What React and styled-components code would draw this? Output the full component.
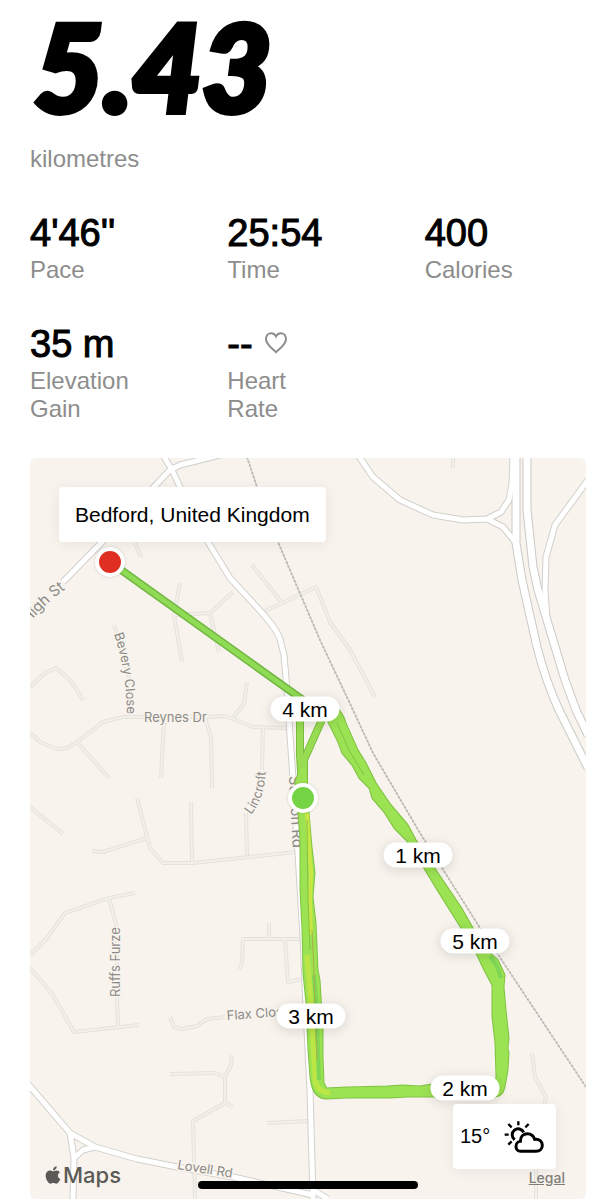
import React from 'react';
import styled, { createGlobalStyle } from 'styled-components';
import { FaApple } from 'react-icons/fa';

const GlobalStyle = createGlobalStyle`
  * {
    box-sizing: border-box;
  }

  body {
    margin: 0;
    background: #fff;
    color: #000;
    font-family: "Liberation Sans", Arial, sans-serif;
  }
`;

const Page = styled.main`
  padding: 16px 29px 1px 30px;
`;

const Distance = styled.h1`
  margin: 0;
  padding-left: 4px;
  font: italic 900 120px/100px Lato, sans-serif;
  -webkit-text-stroke: 6px #000;
`;

const Unit = styled.p`
  margin: 29px 0 0;
  color: #8d8d8d;
  font-size: 24px;
  line-height: 28px;
`;

const Stats = styled.dl`
  display: grid;
  grid-template-columns: repeat(3, 1fr);
  gap: 38px 36px;
  margin: 38px 0 35px;
`;

const Stat = styled.div`
  display: flex;
  flex-direction: column-reverse;
  justify-content: flex-end;
`;

const StatLabel = styled.dt`
  max-width: 110px;
  color: #8d8d8d;
  font-size: 24px;
  line-height: 28px;
`;

const StatValue = styled.dd`
  display: flex;
  align-items: center;
  gap: 12px;
  margin: 0;
  font-size: 38px;
  line-height: 45px;
  -webkit-text-stroke: 1px #000;

  svg {
    margin-bottom: 4px;
  }
`;

const MapCard = styled.section`
  position: relative;
  aspect-ratio: 556 / 741;
  overflow: hidden;
  border-radius: 6px;
  background: #f8f4ed;
`;

const MapDrawing = styled.svg`
  display: block;
  width: 100%;
  height: 100%;

  path {
    fill: none;
    stroke-linejoin: round;
  }

  text {
    fill: #8c8a88;
    stroke: #f8f4ed;
    stroke-width: 3px;
    paint-order: stroke;
    font-family: Inter, sans-serif;
    font-size: 13px;
  }
`;

const MainRoadName = styled.text`
  && {
    font-size: 15px;
  }
`;

const Card = styled.div`
  position: absolute;
  display: flex;
  align-items: center;
  border-radius: 4px;
  background: #fff;
  box-shadow: 0 2px 14px rgba(0, 0, 0, 0.07);
`;

const PlaceCard = styled(Card)`
  top: 29px;
  left: 29px;
  height: 55px;
  padding: 0 16px;
  font-size: 21px;
`;

const WeatherCard = styled(Card)`
  right: 30px;
  bottom: 30px;
  justify-content: space-between;
  width: 103px;
  height: 65px;
  padding: 0 12px 0 7px;
  font-size: 20px;
`;

// x and y are in the same units as the map drawing
const Pin = styled.span`
  position: absolute;
  left: ${props => ((props.$x - 30) / 556) * 100}%;
  top: ${props => ((props.$y - 458) / 741) * 100}%;
  transform: translate(-50%, -50%);
`;

const KmPin = styled(Pin)`
  width: 69px;
  border-radius: 13px;
  background: #fff;
  box-shadow: 0 2px 12px rgba(0, 0, 0, 0.14);
  font-size: 21px;
  line-height: 25px;
  text-align: center;
`;

const DotPin = styled(Pin)`
  width: 30px;
  height: 30px;
  border: 4px solid #fff;
  border-radius: 50%;
  background: ${props => props.$color};
  box-shadow: 0 0 3px rgba(0, 0, 0, 0.16);
`;

const Attribution = styled.div`
  position: absolute;
  left: 13px;
  bottom: 11px;
  display: flex;
  align-items: center;
  color: #5b5a57;
  font: 500 22px/26px Inter, sans-serif;
`;

const LegalLink = styled.a`
  position: absolute;
  right: 21px;
  bottom: 12px;
  color: #807e7b;
  font: 500 14px/18px Inter, sans-serif;
`;

const HomeIndicator = styled.div`
  position: fixed;
  bottom: 11px;
  left: 50%;
  width: 220px;
  height: 8px;
  border-radius: 4px;
  background: #000;
  transform: translateX(-50%);
`;

const stats = [
  { label: 'Pace', value: "4'46''" },
  { label: 'Time', value: '25:54' },
  { label: 'Calories', value: '400' },
  { label: 'Elevation Gain', value: '35 m' },
  { label: 'Heart Rate', value: '--', heart: true },
];

const kmPins = [
  { km: 3, x: 311, y: 1016 },
  { km: 2, x: 465, y: 1088 },
  { km: 1, x: 418, y: 855 },
  { km: 5, x: 475, y: 941 },
  { km: 4, x: 305, y: 709 },
];

const lanes = `
  M135 543L141 557 M180 583L174 615L182 662 M174 615L210 613L233 592 M210 613L219 652
  M252 565L282 603 M261 613L282 603L316 587L330 622L350 650L375 697
  M114 625L132 690V717 M30 687L45 673L56 668L70 680L83 700 M247 682L244 703L233 718
  M30 733L40 742L57 749L67 748L77 742L103 722L123 717H205L225 716L253 727L288 728
  M77 742L109 778 M164 720L161 778 M205 718L211 737L212 788 M263 728L262 770
  M246 813L247 855 M137 798L150 848L163 863H193L295 852 M191 802L192 863
  M92 851L103 852L147 838 M30 807L63 834 M135 893L109 898L65 913L47 938L30 955
  M109 898L117 928V997L118 1027 M269 923V939 M303 939H243L242 963L239 970
  M285 940L288 982L303 979 M30 968L53 995L74 1032L139 1025
  M170 1017L174 1027L182 1029L197 1026L207 1019L225 1017
  M170 1074L215 1073L225 1077V1103L193 1121L195 1199 M232 1055L231 1065L225 1077
  M225 1103L233 1107 M267 1123L309 1121 M532 1053L535 1077L546 1097L536 1140V1199
  M453 457V468`;

const streets = `
  M220 455L180 465L170 470L102 542L63 582
  M358 455L373 477L400 500L433 515L463 520L487 519L501 512L509 500L512 483L513 455
  M487 519L503 527L516 543 M588 480L555 525L546 557L545 590L547 620
  M74 1158L83 1150L95 1147 M313 1190L328 1199`;

const mainRoads = `
  M163 455L172 470L180 487L208 542L230 578L264 615Q277 630 280 639L284 655L287 690L290 735
  L298 853L303 937L307 1030L310 1090L313 1199
  M28 1084L70 1133L95 1147L137 1159L177 1167L233 1177L313 1195
  M70 1133L74 1158L73 1199`;

const motorways = `
  M516 455V543L522 580L537 647Q546 682 559 710L588 768
  M527 455V510L533 567L538 590L550 630L565 680L576 710L588 735`;

const railway = 'M247 457L257 487L278 542L320 640L353 710L373 753L420 833L480 928L497 953L586 1087';

const strands = 'M300 700V755L302 785M324 715L304 760V785';

const loop = `
  M335 707Q342 713 345 723L357 750L365 763L375 783L390 805L407 825L415 840L437 873L460 907
  L472 928L488 952L497 960L504 975L503 987L505 1010L508 1038L507 1048L508 1053L507 1070
  L504 1087Q502 1096 495 1096H432L408 1096L390 1097L347 1097L327 1098Q313 1098 311 1077
  L309 1050L307 1003L304 973L303 930L301 890V840L299 813L296 782L301 768L305 768L306 780
  L308 813L311 847L314 873L312 897L315 923L317 970L319 980L320 997L322 1027V1057L323 1083
  L326 1089L347 1088L387 1087L403 1086L420 1087L432 1085H490Q497 1084 497 1077L496 1043
  L493 1017V985L485 970L477 953L462 928L440 893L423 865L407 840L395 828L385 812L373 798
  L370 788L360 778L353 765L343 753L338 740L328 720Z`;

const HeartIcon = () => (
  <svg width="22" height="22" viewBox="0 0 22 22" fill="none" stroke="#8d8d8d" strokeWidth="2" aria-hidden="true">
    <path d="M11 20.2C8.5 17.2 1 13 1 6.9C1 3.5 3.4 1.2 6.2 1.2C8.5 1.2 10.2 2.6 11 4.4C11.8 2.6 13.5 1.2 15.8 1.2C18.6 1.2 21 3.5 21 6.9C21 13 13.5 17.2 11 20.2Z" />
  </svg>
);

const WeatherIcon = () => (
  <svg width="40" height="32" viewBox="0 0 120 96" fill="none" stroke="#000" strokeWidth="9" role="img" aria-label="Partly cloudy">
    <path d="M43 1V13M74 9L64 19M13 9L23 19M2 41H14M13 71L23 61" strokeWidth="7" />
    <path d="M32 56A18 18 0 1 1 59 34" />
    <path d="M50 91C31 91 32 62 49 61C49 46 59 38 70 38C82 38 89 45 92 55C106 53 115 62 115 73C115 84 107 91 96 91Z" />
  </svg>
);

const RouteMap = () => (
  <MapDrawing viewBox="30 458 556 741" preserveAspectRatio="none" aria-label="Route map" role="img">
    <path d={lanes} stroke="#e5e2dc" strokeWidth="4" />
    <path d={lanes} stroke="#f3f0ea" strokeWidth="2" />
    <path d={railway} stroke="#c4c1bd" strokeWidth="1" />
    <path d={railway} stroke="#bdbab6" strokeWidth="2" strokeDasharray="2 2" />
    <path d={streets} stroke="#d2d0cd" strokeWidth="7" />
    <path d={mainRoads} stroke="#d2d0cd" strokeWidth="7" />
    <path d={motorways} stroke="#cbc9c7" strokeWidth="9" />
    <path d={streets} stroke="#fff" strokeWidth="5" />
    <path d={mainRoads} stroke="#fff" strokeWidth="5" />
    <path d={motorways} stroke="#fff" strokeWidth="7" />

    <defs>
      <path id="high-st" d="M28 624L44 607Q56 595 82 577" />
      <path id="bevery" d="M114 634Q127 672 127 720" />
      <path id="lincroft" d="M251 815Q266 797 266 765" />
    </defs>
    <MainRoadName><textPath href="#high-st">High St</textPath></MainRoadName>
    <text><textPath href="#bevery">Bevery Close</textPath></text>
    <text><textPath href="#lincroft">Lincroft</textPath></text>
    <text x="144" y="722">Reynes Dr</text>
    <MainRoadName transform="translate(289 776) rotate(87)">Station Rd</MainRoadName>
    <text transform="translate(120 997) rotate(-90)">Ruffs Furze</text>
    <text transform="translate(227 1020) rotate(-4)">Flax Close</text>
    <text transform="translate(177 1169) rotate(9)">Lovell Rd</text>

    <path d="M110 562L310 705" stroke="#72b642" strokeWidth="8" />
    <path d="M110 562L310 705" stroke="#8fdb55" strokeWidth="5" />
    <path d={strands} stroke="#78bd40" strokeWidth="8" />
    <path d={loop} stroke="#80c244" strokeWidth="3" />
    <path d={strands} stroke="#98dc52" strokeWidth="6" />
    <path d={loop} style={{ fill: '#9ce353' }} stroke="#9ce353" strokeWidth="1" />
    <path d="M307 813L309 845L311 873L310 900L311 935" stroke="#c9e744" strokeWidth="4" />
    <path d="M307 955L310 990L313 1040L315 1080Q317 1092 330 1093" stroke="#bce646" strokeWidth="5" />
    <path d="M314 975L316 1000L318 1050L319 1080" stroke="#7fd654" strokeWidth="4" />
    <path d="M312 930L314 970L315 1010L317 1060" stroke="#aab044" strokeWidth="1" />
    <path d="M307 820L308 900L310 950M337 723L350 752L364 775" stroke="#83c245" strokeWidth="1" />
    <path d="M490 956L497 966L501 978" stroke="#7fd654" strokeWidth="4" />
  </MapDrawing>
);

export default function App() {
  return (
    <>
      <GlobalStyle />
      <Page>
        <Distance>5.43</Distance>
        <Unit>kilometres</Unit>

        <Stats>
          {stats.map(stat => (
            <Stat key={stat.label}>
              <StatLabel>{stat.label}</StatLabel>
              <StatValue>
                {stat.value}
                {stat.heart && <HeartIcon />}
              </StatValue>
            </Stat>
          ))}
        </Stats>

        <MapCard>
          <RouteMap />
          <DotPin $x={110} $y={562} $color="#df2f22" />
          <DotPin $x={303} $y={798} $color="#75d444" />
          {kmPins.map(pin => (
            <KmPin key={pin.km} $x={pin.x} $y={pin.y}>{pin.km} km</KmPin>
          ))}
          <PlaceCard>Bedford, United Kingdom</PlaceCard>
          <WeatherCard>
            15°
            <WeatherIcon />
          </WeatherCard>
          <Attribution>
            <FaApple size={20} aria-label="Apple" />
            Maps
          </Attribution>
          <LegalLink href="#legal">Legal</LegalLink>
        </MapCard>
      </Page>
      <HomeIndicator />
    </>
  );
}
